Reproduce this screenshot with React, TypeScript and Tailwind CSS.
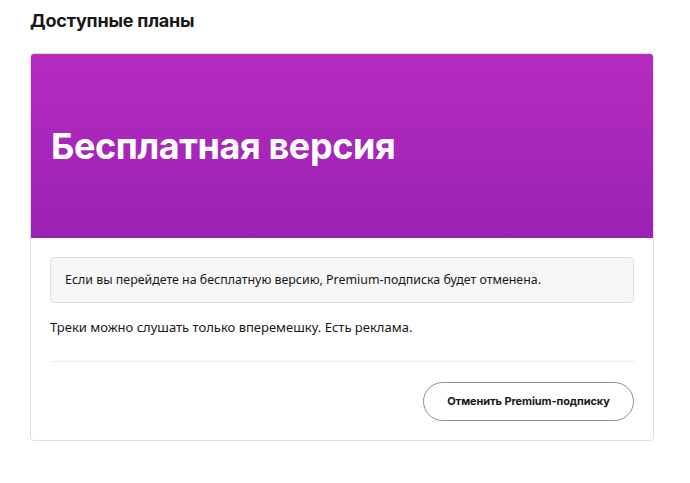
export default function App() {
  return (
    <div className="h-[483px] w-[690px] bg-white font-['Noto_Sans',sans-serif] text-[#181818]">
      <div className="pl-[30px] pr-[36px] pt-[9px]">
        <h2 className="font-['Inter',sans-serif] text-[18px] font-bold leading-6 tracking-[-0.2px] text-[#181818]">
          Доступные планы
        </h2>
        <div className="mt-[20px] overflow-hidden rounded-[4px] border border-[#dedede]">
          <div className="flex h-[184px] items-center bg-gradient-to-b from-[#b52bbf] to-[#9a22b3] px-[20px]">
            <h1 className="font-['Inter',sans-serif] text-[36px] font-bold leading-none tracking-[-0.4px] text-white">
              Бесплатная версия
            </h1>
          </div>
          <div className="px-[19px] pb-[19px] pt-[19px]">
            <div className="rounded-[4px] border border-[#dedede] bg-[#f7f7f7] px-[14px] py-[13px] text-[12.4px] leading-[18px]">
              Если вы перейдете на бесплатную версию, Premium-подписка будет отменена.
            </div>
            <p className="mt-[15px] text-[13px] leading-[18px]">
              Треки можно слушать только вперемешку. Есть реклама.
            </p>
            <div className="mt-[25px] border-t border-[#ececec]" />
            <div className="mt-[20px] flex justify-end">
              <button className="h-[39px] w-[211px] rounded-full border border-[#8f8f8f] font-['Inter',sans-serif] text-[11px] font-bold tracking-[-0.1px] text-[#181818]">
                Отменить Premium-подписку
              </button>
            </div>
          </div>
        </div>
      </div>
    </div>
  );
}
